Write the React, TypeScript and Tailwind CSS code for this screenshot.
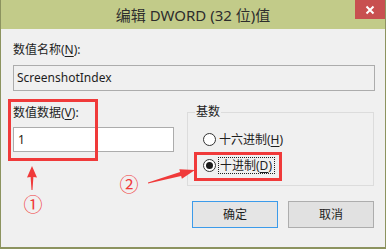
import React from "react";

const font = { fontFamily: '"Noto Sans","Noto Sans CJK SC",sans-serif' };

function U({ c }: { c: string }) {
  return <span className="underline underline-offset-2 decoration-1">{c}</span>;
}

function Radio({ checked }: { checked?: boolean }) {
  return (
    <span className="flex h-[13px] w-[13px] items-center justify-center rounded-full border border-[#333333] bg-white">
      {checked ? <span className="h-[7px] w-[7px] rounded-full bg-[#1a1a1a]" /> : null}
    </span>
  );
}

export default function App() {
  return (
    <div
      className="relative flex h-[249px] w-[386px] flex-col overflow-hidden border-x border-b-2 border-[#8c935f] bg-[#f0f0f0] text-[12px] leading-[16px] text-[#1e1e1e]"
      style={font}
    >
      {/* title bar */}
      <div className="relative flex h-[29px] shrink-0 items-center justify-center bg-[#c2cb89] text-[15px] text-[#2d2d2d]">
        <span className="mt-[1px]">编辑 DWORD (32 位)值</span>
        <div className="absolute right-0 top-0 flex h-[19px] w-[30px] items-center justify-center bg-[#c85050]">
          <svg width="10" height="10" viewBox="0 0 10 10">
            <path d="M1.5 1.5 L8.5 8.5 M8.5 1.5 L1.5 8.5" stroke="#ffffff" strokeWidth="2" />
          </svg>
        </div>
      </div>

      {/* body */}
      <div className="flex flex-col pl-[12px] pr-[10px]">
        <div className="mt-[13px]">
          数值名称(<U c="N" />):
        </div>
        <div className="mt-[7px] flex h-[26px] items-center border border-[#acacac] bg-[#f0f0f0] pl-[3px]">
          ScreenshotIndex
        </div>

        <div className="mt-[13px] flex">
          <div className="flex w-[161px] flex-col">
            <div className="mt-[1px]">
              数值数据(<U c="V" />):
            </div>
            <div className="mt-[6px] flex h-[25px] items-center border border-[#acacac] bg-white pl-[4px] text-[#2a1c10]">
              1
            </div>
          </div>

          <fieldset className="ml-[13px] mr-[1px] flex-1 border border-[#dcdcdc] pb-[11px] pl-[15px]">
            <legend className="ml-[-8px] px-[1px]">基数</legend>
            <div className="mt-[11px] flex h-[17px] items-center">
              <Radio />
              <span className="ml-[3px]">
                十六进制(<U c="H" />)
              </span>
            </div>
            <div className="mt-[9px] flex h-[17px] items-center">
              <Radio checked />
              <span className="ml-[2px] flex h-[17px] items-center border border-dotted border-[#202020] pl-[1px] pr-[2px]">
                十进制(<U c="D" />)
              </span>
            </div>
          </fieldset>
        </div>

        <div className="mr-[1px] mt-[15px] flex justify-end gap-[10px]">
          <div className="flex h-[27px] w-[86px] items-center justify-center border border-[#3c9bea] bg-[#e5e5e5]">
            确定
          </div>
          <div className="flex h-[27px] w-[86px] items-center justify-center border border-[#adadad] bg-[#e1e1e1]">
            取消
          </div>
        </div>
      </div>

      {/* annotations */}
      <div className="pointer-events-none absolute left-[7px] top-[99px] h-[62px] w-[90px] border-[3px] border-[#f03a3a]" />
      <div className="pointer-events-none absolute left-[193px] top-[152px] h-[29px] w-[88px] border-[3px] border-[#f03a3a]" />
      <svg className="pointer-events-none absolute left-[-1px] top-0" width="386" height="249" viewBox="0 0 386 249">
        <polygon
          points="31.5,190 30.6,177 27,177.5 32,166 37,177.5 33.4,177 32.5,190"
          fill="#f03a3a"
        />
        <polygon
          points="148,183.6 181.1,175.9 181.9,178.8 195,170 179.3,169.2 180.1,172.1 148,182.4"
          fill="#f03a3a"
        />
      </svg>
      <span
        className="pointer-events-none absolute left-[21px] top-[192px] flex h-[22px] w-[22px] items-center justify-center text-[19px] leading-none text-[#f03a3a]"
        style={{ fontFamily: '"Noto Sans CJK SC",sans-serif' }}
      >
        ①
      </span>
      <span
        className="pointer-events-none absolute left-[117px] top-[172px] flex h-[22px] w-[22px] items-center justify-center text-[19px] leading-none text-[#f03a3a]"
        style={{ fontFamily: '"Noto Sans CJK SC",sans-serif' }}
      >
        ②
      </span>
    </div>
  );
}
